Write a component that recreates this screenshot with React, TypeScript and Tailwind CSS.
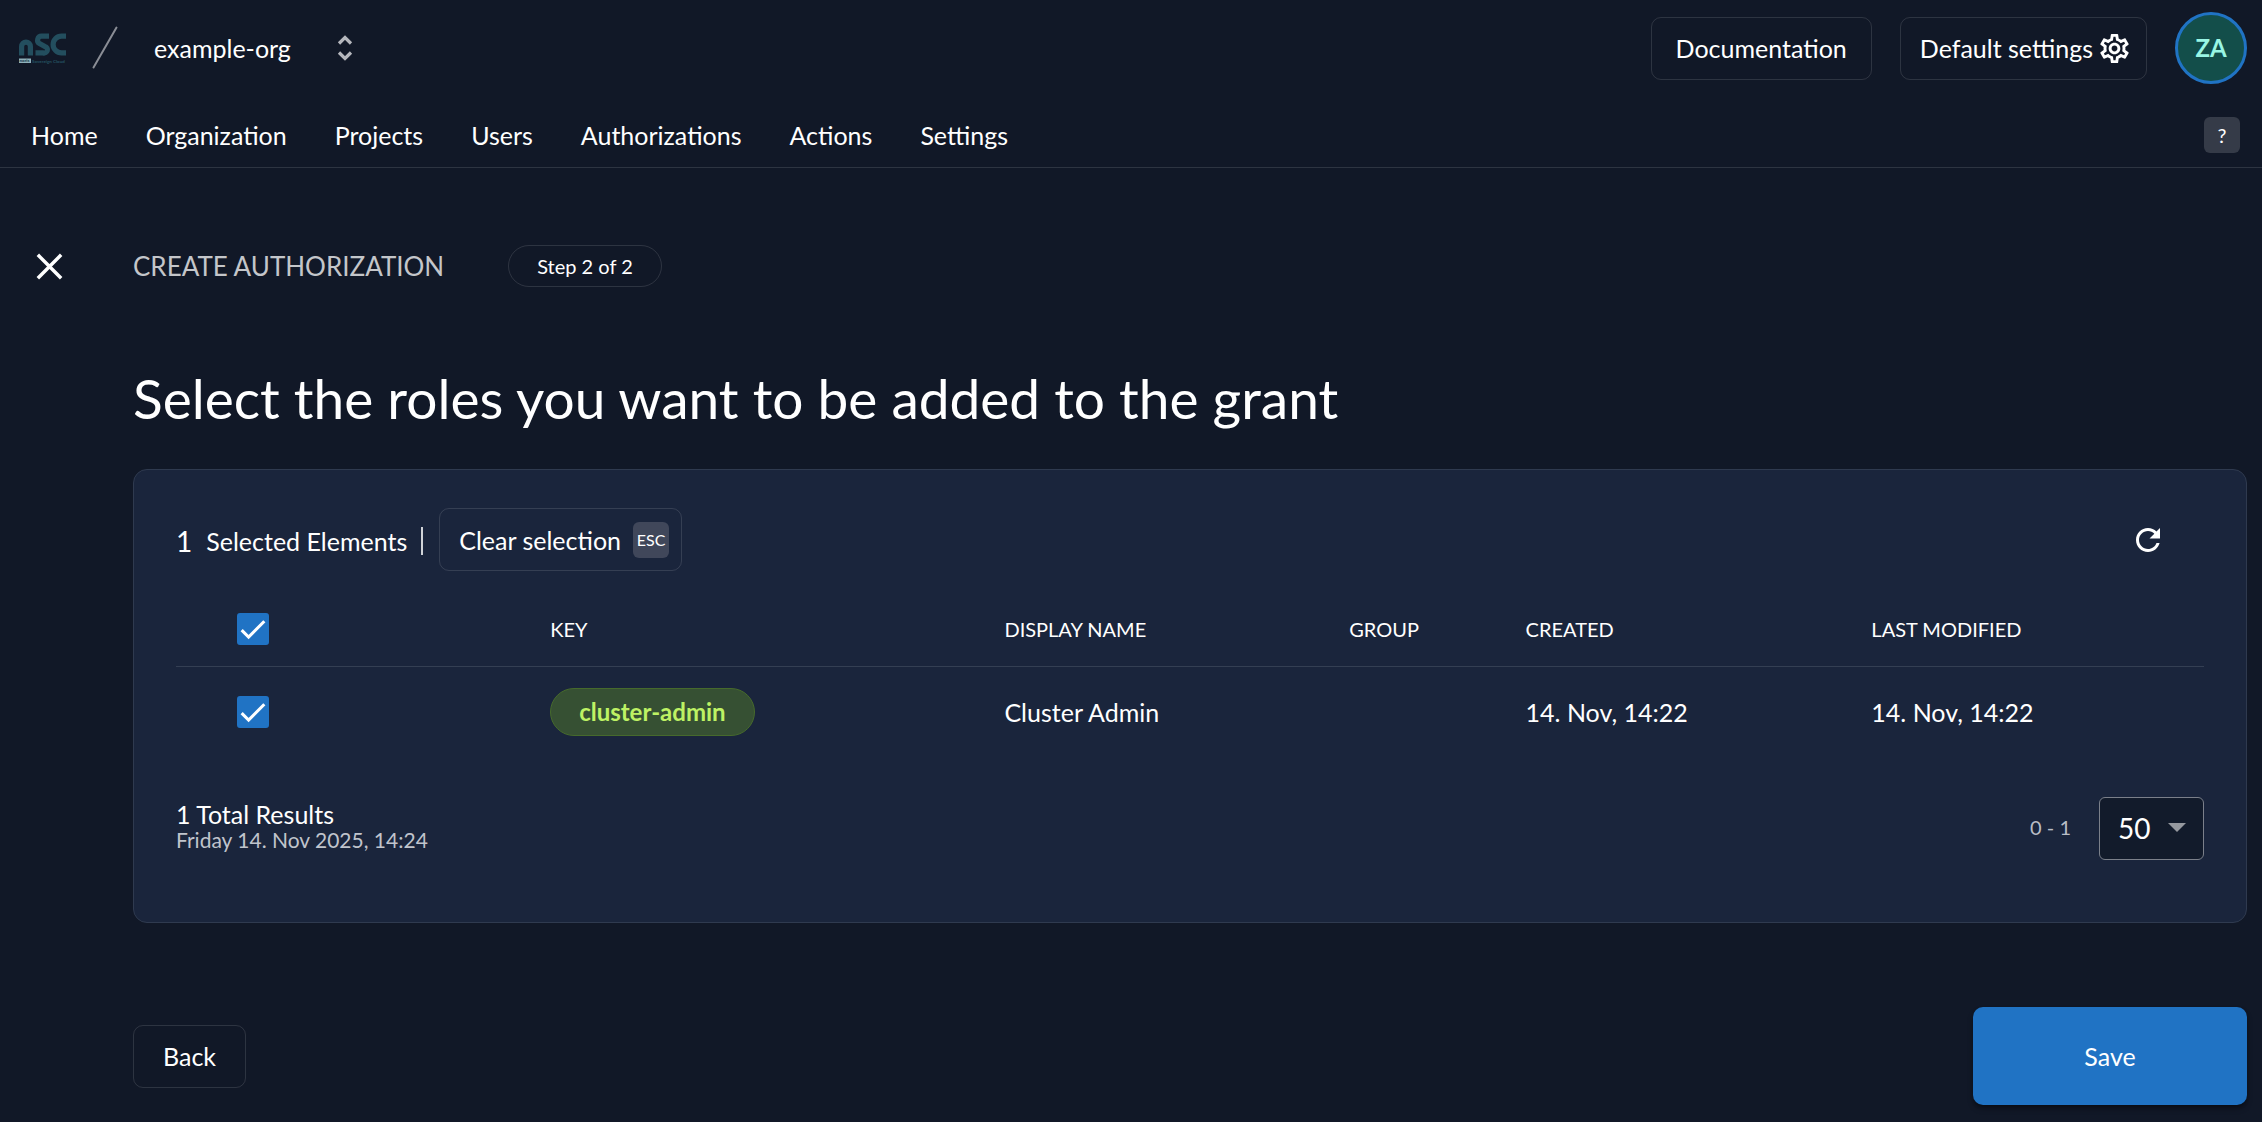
import React, { useState } from 'react';
import clsx from 'clsx';

const navItems = ['Home', 'Organization', 'Projects', 'Users', 'Authorizations', 'Actions', 'Settings'];

const roles = [
  { key: 'cluster-admin', name: 'Cluster Admin', group: '', created: '14. Nov, 14:22', modified: '14. Nov, 14:22' },
];

const outlineButton =
  'flex h-[63px] cursor-pointer items-center rounded-[10px] border border-white/12 text-white hover:bg-white/5';

function Logo() {
  return (
    <svg viewBox="0 0 48 31" className="h-[31px] w-12" aria-label="nSC logo" role="img">
      <g fill="none" stroke="#234e5e" strokeWidth="5.200">
        <path d="M3.600 22.500V13.500a4.400 4.400 0 0 1 8.800 0v9" />
        <path d="M31 3.100h-7.500a4 4 0 0 0-2 7.400l5.500 3a3.300 3.300 0 0 1-1.800 6.400H17.500" />
        <path d="M48 3.100h-4.500a8.400 8.400 0 0 0 0 16.800H48" />
      </g>
      <rect x="1" y="25.500" width="12" height="4.500" fill="#8fb0ba" />
      <text x="1.500" y="29.300" fontSize="4.500" fontWeight="900" fill="#1d4050">noris</text>
      <text x="14" y="29.500" fontSize="4.500" fontWeight="900" fill="#234e5e">Sovereign Cloud</text>
    </svg>
  );
}

function Checkbox({ label, checked, onChange }: { label: string; checked: boolean; onChange: () => void }) {
  return (
    <label className="relative block h-8 w-8 cursor-pointer">
      <input
        type="checkbox"
        aria-label={label}
        checked={checked}
        onChange={onChange}
        className="block h-8 w-8 appearance-none rounded-[3px] border-2 border-white/60 checked:border-[#2073c4] checked:bg-[#2073c4]"
      />
      {checked && (
        <svg viewBox="0 0 24 24" className="pointer-events-none absolute inset-0 h-8 w-8" fill="none" stroke="white" strokeWidth="2.300">
          <path d="M3.500 12.900L8.700 18L20.500 6.200" />
        </svg>
      )}
    </label>
  );
}

export default function App() {
  const [selected, setSelected] = useState<string[]>(['cluster-admin']);
  const [pageSize, setPageSize] = useState('50');

  const toggle = (key: string) =>
    setSelected((prev) => (prev.includes(key) ? prev.filter((k) => k !== key) : [...prev, key]));
  const allSelected = selected.length === roles.length;

  return (
    <div className="min-h-screen bg-[#111827] font-['Lato',sans-serif] text-[25px] leading-8 text-white">
      <header className="border-b border-white/12">
        <div className="flex h-24 items-center pr-[15px] pl-[18px]">
          <a href="#home">
            <Logo />
          </a>
          <svg viewBox="0 0 28 44" className="ml-[25px] h-11 w-7" stroke="#8a8d95" strokeWidth="2" strokeLinecap="round">
            <path d="M2.500 41.500L25.500 1.500" />
          </svg>
          <button className="ml-[35px] flex cursor-pointer items-center gap-11">
            <span>example-org</span>
            <svg viewBox="0 0 20 28" className="h-7 w-5" fill="none" stroke="#b5b7bd" strokeWidth="3.200">
              <path d="M4 9.500L10 3.500L16 9.500M4 18.500L10 24.500L16 18.500" />
            </svg>
          </button>

          <div className="ml-auto flex items-center gap-7">
            <a href="#docs" className={clsx(outlineButton, 'px-6')}>Documentation</a>
            <button className={clsx(outlineButton, 'gap-1 pr-[14px] pl-[19px]')}>
              Default settings
              <svg viewBox="0 0 24 24" className="h-[35px] w-[35px]" fill="currentColor">
                <path d="M19.430 12.980c.040-.320.070-.640.070-.980s-.030-.660-.070-.980l2.110-1.650c.190-.150.240-.420.120-.640l-2-3.460c-.090-.160-.260-.250-.440-.250-.060 0-.120.010-.170.030l-2.490 1c-.520-.400-1.080-.730-1.690-.980l-.380-2.650C14.460 2.180 14.250 2 14 2h-4c-.250 0-.460.180-.490.420l-.380 2.650c-.610.250-1.170.590-1.690.980l-2.490-1c-.060-.020-.120-.030-.180-.030-.170 0-.340.090-.430.250l-2 3.460c-.130.220-.070.490.120.640l2.110 1.650c-.040.320-.070.650-.070.980s.030.660.070.980l-2.110 1.650c-.190.150-.240.420-.120.640l2 3.460c.090.160.260.250.440.250.060 0 .120-.010.170-.030l2.490-1c.520.400 1.080.730 1.690.980l.380 2.650c.030.240.240.420.490.420h4c.250 0 .460-.180.490-.420l.380-2.650c.610-.250 1.170-.590 1.690-.980l2.490 1c.060.020.120.030.180.030.170 0 .340-.090.430-.250l2-3.460c.120-.220.070-.490-.120-.640l-2.110-1.650zm-1.980-1.710c.040.310.050.520.050.730 0 .210-.020.430-.050.730l-.140 1.130.890.700 1.080.840-.700 1.210-1.270-.510-1.040-.420-.900.680c-.430.320-.840.560-1.250.730l-1.060.430-.160 1.130-.200 1.350h-1.400l-.190-1.350-.160-1.130-1.060-.430c-.430-.180-.830-.410-1.230-.710l-.910-.700-1.060.430-1.270.510-.700-1.210 1.080-.840.890-.700-.140-1.130c-.030-.310-.050-.540-.050-.740s.020-.430.050-.730l.140-1.130-.890-.700-1.080-.840.700-1.210 1.270.510 1.040.420.900-.680c.430-.320.840-.560 1.250-.730l1.060-.430.160-1.130.200-1.350h1.390l.190 1.350.160 1.130 1.060.430c.430.180.830.410 1.230.710l.910.700 1.060-.430 1.270-.510.700 1.210-1.070.850-.890.700.140 1.130zM12 8c-2.210 0-4 1.790-4 4s1.790 4 4 4 4-1.790 4-4-1.790-4-4-4zm0 6c-1.100 0-2-.900-2-2s.900-2 2-2 2 .900 2 2-.900 2-2 2z" />
              </svg>
            </button>
            <button className="flex h-[72px] w-[72px] cursor-pointer items-center justify-center rounded-full border-[3px] border-[#2073c4] bg-[#134e4a] text-2xl font-bold text-[#99f6e4]">
              ZA
            </button>
          </div>
        </div>

        {/* Section tabs */}
        <div className="flex h-[71px] items-center justify-between pt-[6px] pr-[22px] pl-[31px]">
          <nav className="flex gap-12">
            {navItems.map((item) => (
              <a key={item} href={`#${item.toLowerCase()}`}>{item}</a>
            ))}
          </nav>
          <button className="flex h-9 w-9 cursor-pointer items-center justify-center rounded-md bg-[#353b48] text-xl">?</button>
        </div>
      </header>

      <main className="pr-[15px] pl-[133px]">
        <div className="-ml-[101px] flex items-center pt-[77px]">
          <button aria-label="Close" className="cursor-pointer">
            <svg viewBox="0 0 24 24" className="h-[35px] w-[35px]" fill="none" stroke="white" strokeWidth="2.400">
              <path d="M4 4L20 20M20 4L4 20" />
            </svg>
          </button>
          <p className="ml-[66px] text-[26px] text-[#c4c6ca] uppercase">Create authorization</p>
          <span className="ml-16 flex h-[42px] items-center rounded-full border border-white/12 px-7 text-xl">Step 2 of 2</span>
        </div>

        <h1 className="mt-[76px] text-[55px] leading-[70px]">Select the roles you want to be added to the grant</h1>

        <section className="mt-9 rounded-[14px] border border-[#2f3a4f] bg-[#1a253c] px-[42px] pt-[38px] pb-[62px]">
          <div className="flex items-center">
            <div className="flex items-center pt-[2px]">
              <span className="text-[28px]">{selected.length}</span>
              <span className="ml-[14px]">Selected Elements</span>
              <span className="ml-[14px] h-7 w-[2px] bg-[#d0d3d8]" />
            </div>
            <button className={clsx(outlineButton, 'ml-4 gap-3 pr-3 pl-[19px]')} onClick={() => setSelected([])}>
              Clear selection
              <span className="flex h-9 w-9 items-center justify-center rounded-md bg-[#40475a] text-base">ESC</span>
            </button>
            <button aria-label="Refresh" className="mr-[38px] ml-auto cursor-pointer">
              <svg viewBox="0 0 24 24" className="h-9 w-9" fill="currentColor">
                <path d="M17.650 6.350C16.200 4.900 14.210 4 12 4c-4.420 0-7.990 3.580-7.990 8s3.570 8 7.990 8c3.730 0 6.840-2.550 7.730-6h-2.080c-.820 2.330-3.040 4-5.650 4-3.310 0-6-2.690-6-6s2.690-6 6-6c1.660 0 3.140.690 4.220 1.780L13 11h7V4l-2.350 2.350z" />
              </svg>
            </button>
          </div>

          <table className="mt-[22px] w-full table-fixed text-left">
            <thead>
              <tr className="h-[73px] border-b border-[#343f53] text-xl uppercase">
                <th className="w-[18.45%] pl-[61px]">
                  <Checkbox
                    label="Select all roles"
                    checked={allSelected}
                    onChange={() => setSelected(allSelected ? [] : roles.map((r) => r.key))}
                  />
                </th>
                <th className="w-[22.4%] font-normal">Key</th>
                <th className="w-[17%] font-normal">Display name</th>
                <th className="w-[8.7%] font-normal">Group</th>
                <th className="w-[17.05%] font-normal">Created</th>
                <th className="font-normal">Last modified</th>
              </tr>
            </thead>
            <tbody>
              {roles.map((role) => (
                <tr key={role.key} className="h-[91px]">
                  <td className="pl-[61px]">
                    <Checkbox label={`Select ${role.key}`} checked={selected.includes(role.key)} onChange={() => toggle(role.key)} />
                  </td>
                  <td>
                    <span className="inline-flex h-12 items-center rounded-full border border-[#466a2c] bg-[#365033] px-7 align-middle text-2xl font-bold text-[#bef264]">
                      {role.key}
                    </span>
                  </td>
                  <td>{role.name}</td>
                  <td>{role.group}</td>
                  <td>{role.created}</td>
                  <td>{role.modified}</td>
                </tr>
              ))}
            </tbody>
          </table>

          {/* Paginator */}
          <div className="mt-10 flex items-center">
            <div className="pb-1">
              <p className="leading-[26px]">{roles.length} Total Results</p>
              <p className="text-[21px] leading-[26px] text-[#c0c4cc]">Friday 14. Nov 2025, 14:24</p>
            </div>
            <span className="ml-auto pb-1 text-xl text-[#b9bdc6]">0 - {roles.length}</span>
            <div className="relative ml-7">
              <select
                aria-label="Rows per page"
                value={pageSize}
                onChange={(e) => setPageSize(e.target.value)}
                className="block h-[63px] w-[105px] cursor-pointer appearance-none rounded-md border border-[#7b808a] bg-[#121b2b] pb-[2px] pl-[18px] text-[28px]"
              >
                <option>20</option>
                <option>50</option>
                <option>100</option>
              </select>
              <svg viewBox="0 0 18 9" className="pointer-events-none absolute top-[26px] right-[18px] h-[9px] w-[18px]" fill="#95999f">
                <path d="M0 0h18L9 9z" />
              </svg>
            </div>
          </div>
        </section>

        <div className="mt-[84px] flex items-center justify-between pb-[17px]">
          <button className={clsx(outlineButton, 'px-[29px]')}>Back</button>
          <button className="h-[98px] w-[274px] cursor-pointer rounded-[10px] bg-[#2073c4] shadow-md shadow-black/40">Save</button>
        </div>
      </main>
    </div>
  );
}
